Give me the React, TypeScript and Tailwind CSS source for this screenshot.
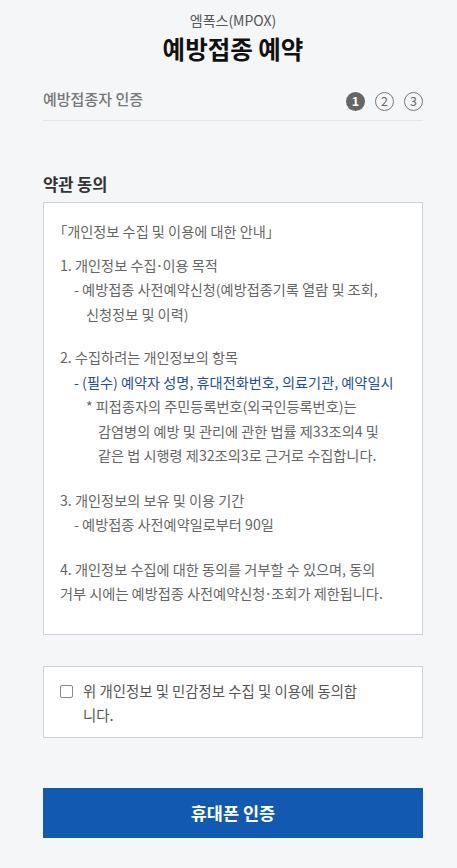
function Dot() {
  return <span className="mx-[-1px]">·</span>;
}

export default function App() {
  const font = { fontFamily: '"Noto Sans CJK KR", "Noto Sans", sans-serif' };
  return (
    <div style={font} className="min-h-screen bg-[#f5f6f8] text-[#333]">
      <div className="ml-[43px] w-[380px] pt-[9px]">
        <div className="text-center text-[14px] leading-[22px] text-[#555]">엠폭스(MPOX)</div>
        <h1 className="mt-[1px] text-center text-[24.5px] font-bold leading-[34px] text-[#111]">예방접종 예약</h1>

        <div className="mt-[21px] flex items-center justify-between border-b border-[#e3e5e8] pb-[9px]">
          <span className="text-[15px] font-medium leading-[20px] text-[#777]">예방접종자 인증</span>
          <div className="mt-[5px] flex items-center gap-[10px]">
            <span className="flex h-[19px] w-[19px] items-center justify-center rounded-full bg-[#666] text-[12.5px] font-bold leading-none text-white">1</span>
            <span className="flex h-[19px] w-[19px] items-center justify-center rounded-full border border-[#777] text-[12.5px] leading-none text-[#666]">2</span>
            <span className="flex h-[19px] w-[19px] items-center justify-center rounded-full border border-[#777] text-[12.5px] leading-none text-[#666]">3</span>
          </div>
        </div>

        <h2 className="mt-[51px] text-[16.5px] font-bold leading-[24px] text-[#333]">약관 동의</h2>
        <div className="mt-[6px] h-[433px] border border-[#cfd1d6] bg-white pl-[16px] pt-[16px] text-[14.2px] leading-[24.5px] text-[#666]">
          <div className="mb-[9px] ml-[-7px]">「개인정보 수집 및 이용에 대한 안내」</div>
          <div>1. 개인정보 수집<Dot />이용 목적</div>
          <div className="pl-[14px]">- 예방접종 사전예약신청(예방접종기록 열람 및 조회,</div>
          <div className="pl-[26px]">신청정보 및 이력)</div>
          <div className="h-[19px]" />
          <div>2. 수집하려는 개인정보의 항목</div>
          <div className="pl-[14px] text-[#1d4f9c]">- (필수) 예약자 성명, 휴대전화번호, 의료기관, 예약일시</div>
          <div className="pl-[26px]">* 피접종자의 주민등록번호(외국인등록번호)는</div>
          <div className="pl-[38px]">감염병의 예방 및 관리에 관한 법률 제33조의4 및</div>
          <div className="pl-[38px]">같은 법 시행령 제32조의3로 근거로 수집합니다.</div>
          <div className="h-[20px]" />
          <div>3. 개인정보의 보유 및 이용 기간</div>
          <div className="pl-[14px]">- 예방접종 사전예약일로부터 90일</div>
          <div className="h-[20px]" />
          <div>4. 개인정보 수집에 대한 동의를 거부할 수 있으며, 동의</div>
          <div>거부 시에는 예방접종 사전예약신청<Dot />조회가 제한됩니다.</div>
        </div>

        <label className="mt-[31px] flex h-[72px] items-start border border-[#cfd1d6] bg-white pl-[16px] pt-[12px]">
          <span className="mt-[6px] h-[13px] w-[13px] shrink-0 rounded-[2px] border border-[#888] bg-white" />
          <span className="ml-[10px] text-[14.4px] leading-[24px] text-[#555]">
            위 개인정보 및 민감정보 수집 및 이용에 동의합
            <br />
            니다.
          </span>
        </label>

        <button className="mt-[50px] flex h-[50px] w-full items-center justify-center bg-[#1259b2] text-[17.5px] font-bold text-white">
          휴대폰 인증
        </button>
      </div>
    </div>
  );
}
